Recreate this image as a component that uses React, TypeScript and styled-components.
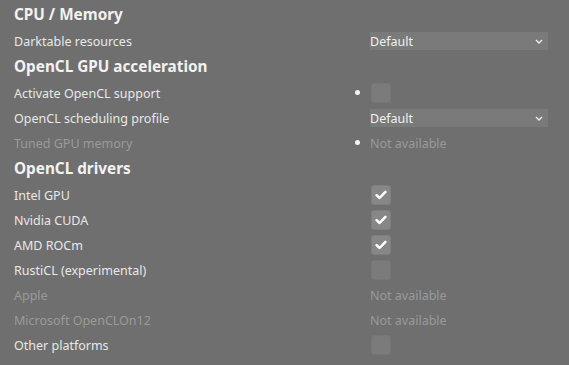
import React from 'react';
import styled, { createGlobalStyle } from 'styled-components';

const GlobalStyle = createGlobalStyle`
  html, body {
    margin: 0;
    padding: 0;
    background: #6f6f6f;
  }
  body {
    font-family: 'Noto Sans', 'Open Sans', sans-serif;
    color: #e6e6e6;
  }
`;

const Page = styled.div`
  width: 569px;
  height: 365px;
  box-sizing: border-box;
  padding: 1px 21px 0 14px;
  display: flex;
  flex-direction: column;
`;

const Heading = styled.div`
  height: 27px;
  display: flex;
  align-items: center;
  padding-bottom: 1px;
  box-sizing: border-box;
  font-size: 15.3px;
  font-weight: 700;
  color: #f2f2f2;
`;

const RowGrid = styled.div`
  height: 25px;
  display: grid;
  grid-template-columns: 1fr 16px 178px;
  align-items: center;
`;

const Label = styled.div<{ dim?: boolean }>`
  padding-top: 1px;
  font-size: 12.5px;
  color: ${p => (p.dim ? '#9a9a9a' : '#e8e8e8')};
`;

const DotCell = styled.div`
  display: flex;
  align-items: center;
`;

const Dot = styled.span`
  width: 5px;
  height: 5px;
  margin-left: 1px;
  border-radius: 50%;
  background: #f4f4f4;
`;

const Control = styled.div`
  display: flex;
  align-items: center;
`;

const Select = styled.div`
  width: 100%;
  height: 18px;
  background: #7a7a7a;
  display: flex;
  align-items: center;
  justify-content: space-between;
  padding: 1px 5px 0 0;
  box-sizing: border-box;
  font-size: 12.5px;
  color: #f0f0f0;
`;

const Box = styled.div<{ checked?: boolean }>`
  width: 20px;
  height: 20px;
  margin-left: 1px;
  box-sizing: border-box;
  border: 1px solid ${p => (p.checked ? '#7e7e7e' : '#767676')};
  border-radius: 3px;
  background: ${p => (p.checked ? '#878787' : '#7b7b7b')};
  display: flex;
  align-items: center;
  justify-content: center;
`;

const Unavailable = styled.span`
  padding-top: 1px;
  font-size: 12.5px;
  color: #9a9a9a;
`;

const Chevron = () => (
  <svg width="8" height="5" viewBox="0 0 8 5">
    <path d="M1 1 L4 4 L7 1" fill="none" stroke="#eeeeee" strokeWidth="1.4" />
  </svg>
);

const Check = () => (
  <svg width="12" height="10" viewBox="0 0 12 10">
    <path
      d="M1.6 5.2 L4.6 8 L10.4 1.8"
      fill="none"
      stroke="#ffffff"
      strokeWidth="2.5"
      strokeLinecap="round"
      strokeLinejoin="round"
    />
  </svg>
);

type Kind = 'select' | 'check' | 'box' | 'na';

interface RowProps {
  label: string;
  kind: Kind;
  dim?: boolean;
  dot?: boolean;
}

const Row = ({ label, kind, dim, dot }: RowProps) => (
  <RowGrid>
    <Label dim={dim}>{label}</Label>
    <DotCell>{dot && <Dot />}</DotCell>
    <Control>
      {kind === 'select' && (
        <Select>
          <span>Default</span>
          <Chevron />
        </Select>
      )}
      {kind === 'check' && (
        <Box checked>
          <Check />
        </Box>
      )}
      {kind === 'box' && <Box />}
      {kind === 'na' && <Unavailable>Not available</Unavailable>}
    </Control>
  </RowGrid>
);

export default function App() {
  return (
    <>
      <GlobalStyle />
      <Page>
        <Heading>CPU / Memory</Heading>
        <Row label="Darktable resources" kind="select" />
        <Heading>OpenCL GPU acceleration</Heading>
        <Row label="Activate OpenCL support" kind="box" dot />
        <Row label="OpenCL scheduling profile" kind="select" />
        <Row label="Tuned GPU memory" kind="na" dim dot />
        <Heading>OpenCL drivers</Heading>
        <Row label="Intel GPU" kind="check" />
        <Row label="Nvidia CUDA" kind="check" />
        <Row label="AMD ROCm" kind="check" />
        <Row label="RustiCL (experimental)" kind="box" />
        <Row label="Apple" kind="na" dim />
        <Row label="Microsoft OpenCLOn12" kind="na" dim />
        <Row label="Other platforms" kind="box" />
      </Page>
    </>
  );
}
